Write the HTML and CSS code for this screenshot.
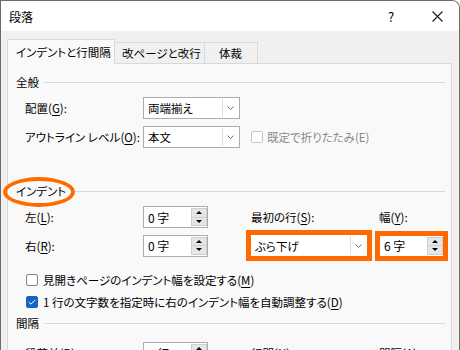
FILE: index.html
```html
<!DOCTYPE html>
<html>
	<head>
		<meta charset="utf-8">
		<title>段落</title>
		<link rel="stylesheet" href="styles.css">
	</head>
	<body>
		<div class="window">
			<div class="titlebar">
				<span class="title">段落</span>
				<span class="help">?</span>
				<span class="close">
					<svg width="11" height="11" viewBox="0 0 11 11"><path d="M0.5 0.5 L10.5 10.5 M10.5 0.5 L0.5 10.5" stroke="#1a1a1a" stroke-width="1.1" fill="none"/></svg>
				</span>
			</div>

			<div class="client">
				<div class="tabs">
					<div class="tab active">インデントと行間隔</div>
					<div class="tab">改ページと改行</div>
					<div class="tab">体裁</div>
				</div>

				<div class="panel">
					<!-- 全般 -->
					<div class="group">全般</div>
					<div class="grid general">
						<span class="label">配置(<u>G</u>):</span>
						<div class="combo"><span>両端揃え</span><i class="drop"><svg width="7" height="4" viewBox="0 0 7 4"><path d="M0.5 0.5 L3.5 3.5 L6.5 0.5" stroke="#707070" fill="none"/></svg></i></div>
						<span></span>
						<span class="label">アウトライン レベル(<u>O</u>):</span>
						<div class="combo"><span>本文</span><i class="drop"><svg width="7" height="4" viewBox="0 0 7 4"><path d="M0.5 0.5 L3.5 3.5 L6.5 0.5" stroke="#707070" fill="none"/></svg></i></div>
						<span class="check disabled"><i class="box"></i>既定で折りたたみ(E)</span>
					</div>

					<!-- インデント -->
					<div class="group indent-head">インデント<span class="ring"></span></div>
					<div class="grid indent">
						<span class="label">左(<u>L</u>):</span>
						<div class="spin"><span>0&nbsp;字</span><span class="arrows"><i class="up"></i><i class="down"></i></span></div>
						<span class="label">最初の行(<u>S</u>):</span>
						<span class="label">幅(<u>Y</u>):</span>

						<span class="label">右(<u>R</u>):</span>
						<div class="spin"><span>0&nbsp;字</span><span class="arrows"><i class="up"></i><i class="down"></i></span></div>
						<div class="combo wide hl"><span>ぶら下げ</span><i class="drop"><svg width="7" height="4" viewBox="0 0 7 4"><path d="M0.5 0.5 L3.5 3.5 L6.5 0.5" stroke="#707070" fill="none"/></svg></i></div>
						<div class="spin hl"><span>6&nbsp;字</span><span class="arrows"><i class="up"></i><i class="down"></i></span></div>
					</div>

					<div class="checks">
						<span class="check"><i class="box"></i>見開きページのインデント幅を設定する(<u>M</u>)</span>
						<span class="check"><i class="box on"><svg width="8" height="6" viewBox="0 0 8 6"><path d="M0.7 3 L3 5.2 L7.3 0.8" stroke="#fff" stroke-width="1" fill="none"/></svg></i>1 行の文字数を指定時に右のインデント幅を自動調整する(<u>D</u>)</span>
					</div>

					<!-- 間隔 -->
					<div class="group spacing-head">間隔</div>
					<div class="grid indent spacing">
						<span class="label">段落前(<u>B</u>):</span>
						<div class="spin"><span>0&nbsp;行</span><span class="arrows"><i class="up"></i><i class="down"></i></span></div>
						<span class="label">行間(<u>N</u>):</span>
						<span class="label">間隔(<u>A</u>):</span>
					</div>
				</div>
			</div>
		</div>
	</body>
</html>
```

FILE: styles.css
```css
*{
	box-sizing: border-box;
}
body{
	margin: 0;
	width: 460px;
	height: 350px;
	overflow: hidden;
	background: #fff;
	color: #000;
	font-family: "Noto Sans CJK JP", sans-serif;
	font-size: 11.5px;
	font-feature-settings: "palt";
	white-space: nowrap;
}
u{
	text-underline-offset: 2px;
}

/* ウィンドウ枠 */
.window{
	height: 350px;
	border: 1px solid #6b6b6b;
	border-bottom: none;
	border-top-right-radius: 8px;
	background: #f0f0f0;
	overflow: hidden;
}
.titlebar{
	display: flex;
	align-items: center;
	height: 30px;
	padding-left: 8px;
	background: #fff;
}
.title{
	flex: 1;
	font-size: 12px;
}
.help{
	width: 46px;
	margin-right: 1px;
	text-align: center;
	font-size: 13px;
}
.close{
	display: flex;
	justify-content: center;
	width: 44px;
}

/* タブ */
.client{
	padding: 8px 7px 0 6px;
}
.tabs{
	display: flex;
	align-items: flex-end;
}
.tab{
	height: 21px;
	margin-left: -1px;
	padding-left: 7px;
	border: 1px solid #d9d9d9;
	border-bottom: none;
	background: #f0f0f0;
	line-height: 20px;
}
.tab:nth-child(2){
	width: 91px;
}
.tab:nth-child(3){
	width: 54px;
	padding-left: 14px;
}
.tab.active{
	position: relative;
	z-index: 1;
	width: 108px;
	height: 25px;
	margin-left: 0;
	margin-bottom: -1px;
	padding-left: 8px;
	background: #f9f9f9;
	line-height: 24px;
}
.panel{
	height: 300px;
	padding: 10px 6px 0 8px;
	border: 1px solid #d9d9d9;
	background: #f9f9f9;
}

/* グループ見出し */
.group{
	position: relative;
	display: flex;
	align-items: center;
	height: 16px;
	line-height: 16px;
}
.group::after{
	content: '';
	flex: 1;
	height: 1px;
	margin-left: 5px;
	background: #dadada;
}
.indent-head{
	margin-top: 35px;
}
.spacing-head{
	margin-top: 2px;
}
.ring{
	position: absolute;
	left: -13px;
	top: -6px;
	width: 72px;
	height: 30px;
	border: 4px solid #ff6a00;
	border-radius: 50%;
}

/* 行 */
.grid{
	display: grid;
	align-items: center;
	padding-left: 9px;
}
.general{
	grid-template-columns: 118px 108px auto;
	grid-template-rows: 22px 22px;
	row-gap: 7px;
	margin-top: 7px;
}
.indent{
	grid-template-columns: 118px 108px 128px 65px;
	grid-template-rows: 22px 23px;
	row-gap: 6px;
	margin-top: 7px;
}
.spacing{
	margin-top: 11px;
}

.combo{
	display: flex;
	align-items: center;
	width: 97px;
	height: 22px;
	padding: 1px 1px 1px 4px;
	border: 1px solid #adadad;
	background: #fff;
}
.combo span{
	flex: 1;
}
.drop{
	display: flex;
	align-items: center;
	justify-content: center;
	width: 16px;
	height: 100%;
	border-left: 1px solid #dedede;
}
.combo.wide{
	width: 118px;
	height: 23px;
	margin-left: -1px;
}

.spin{
	display: flex;
	align-items: center;
	justify-content: space-between;
	width: 65px;
	height: 22px;
	padding: 1px 0 1px 4px;
	border: 1px solid #adadad;
	background: #fff;
}
.spin span:first-child{
	font-size: 12px;
	font-feature-settings: normal;
}
.arrows{
	display: flex;
	flex-direction: column;
	width: 16px;
	height: 100%;
}
.arrows i{
	display: flex;
	align-items: center;
	justify-content: center;
	flex: 1;
	border: 1px solid #cfcfcf;
	background: #e6e6e6;
}
.arrows i + i{
	border-top: none;
}
.arrows i::before{
	content: '';
	border-left: 3px solid transparent;
	border-right: 3px solid transparent;
}
.up::before{
	border-bottom: 3px solid #000;
}
.down::before{
	border-top: 3px solid #000;
}

/* 強調の枠 */
.hl{
	outline: 5px solid #ff6a00;
	outline-offset: -1px;
}

/* チェックボックス */
.check{
	display: flex;
	align-items: center;
}
.box{
	display: flex;
	align-items: center;
	justify-content: center;
	width: 12px;
	height: 12px;
	margin-right: 5px;
	border: 1px solid #858585;
	border-radius: 2px;
	background: #fff;
}
.box.on{
	border-color: #0f67c2;
	background: #0f67c2;
}
.disabled{
	color: #8a8a8a;
}
.disabled .box{
	margin-right: 4px;
	border-color: #c6c6c6;
}
.checks{
	margin-top: 12px;
	padding-left: 10px;
}
.checks .check{
	height: 22px;
}
```
